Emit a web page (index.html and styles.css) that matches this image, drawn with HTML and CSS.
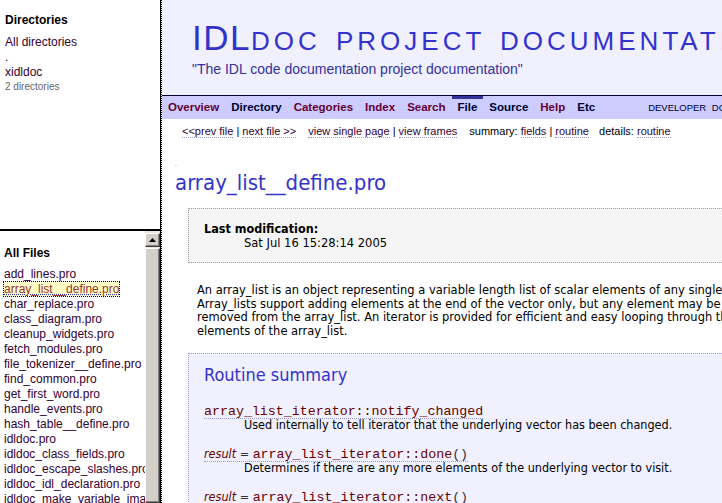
FILE: index.html
```html
<!DOCTYPE html>
<html>
<head>
<meta charset="utf-8">
<title>array_list__define.pro</title>
<link rel="stylesheet" href="styles.css">
</head>
<body>
<div class="frames">
  <div class="left">
    <div class="dirs">
      <div class="lh">Directories</div>
      <div class="dgap"></div>
      <div class="dlink"><a href="#">All directories</a></div>
      <div class="dlink"><a href="#">.</a></div>
      <div class="dlink"><a href="#">xidldoc</a></div>
      <div class="count">2 directories</div>
    </div>
    <div class="files">
      <div class="filelist">
        <div class="lh fh">All Files</div>
        <ul class="flist">
          <li><a href="#">add_lines.pro</a></li>
          <li><a href="#" class="current">array_list__define.pro</a></li>
          <li><a href="#">char_replace.pro</a></li>
          <li><a href="#">class_diagram.pro</a></li>
          <li><a href="#">cleanup_widgets.pro</a></li>
          <li><a href="#">fetch_modules.pro</a></li>
          <li><a href="#">file_tokenizer__define.pro</a></li>
          <li><a href="#">find_common.pro</a></li>
          <li><a href="#">get_first_word.pro</a></li>
          <li><a href="#">handle_events.pro</a></li>
          <li><a href="#">hash_table__define.pro</a></li>
          <li><a href="#">idldoc.pro</a></li>
          <li><a href="#">idldoc_class_fields.pro</a></li>
          <li><a href="#">idldoc_escape_slashes.pro</a></li>
          <li><a href="#">idldoc_idl_declaration.pro</a></li>
          <li><a href="#">idldoc_make_variable_image.pro</a></li>
          <li><a href="#">idldoc_process_file.pro</a></li>
        </ul>
      </div>
      <div class="scrollbar">
        <div class="sb-btn"><svg width="7" height="4" viewBox="0 0 7 4"><path d="M3.5 0 L7 4 L0 4 Z" fill="#000"/></svg></div>
        <div class="sb-thumb"></div>
      </div>
    </div>
  </div>
  <div class="right">
    <div class="page">
      <div class="header">
        <div class="title">IDL<span class="sc">doc project documentation</span></div>
        <div class="subtitle">"The IDL code documentation project documentation"</div>
      </div>
      <div class="nav">
        <a href="#" class="nav-item link">Overview</a>
        <span class="nav-item">Directory</span>
        <a href="#" class="nav-item link">Categories</a>
        <a href="#" class="nav-item link">Index</a>
        <a href="#" class="nav-item link">Search</a>
        <span class="nav-item selected">File</span>
        <span class="nav-item">Source</span>
        <a href="#" class="nav-item link">Help</a>
        <span class="nav-item">Etc</span>
        <span class="nav-label">DEVELOPER DOCUMENTATION</span>
      </div>
      <div class="subnav">
        <span class="grp"><a href="#">&lt;&lt;prev file</a> | <a href="#">next file &gt;&gt;</a></span>
        <span class="grp"><a href="#">view single page</a> | <a href="#">view frames</a></span>
        <span class="grp">summary: <a href="#">fields</a> | <a href="#">routine</a></span>
        <span class="grp">details: <a href="#">routine</a></span>
      </div>
      <div class="main">
        <div class="anchor">.</div>
        <h1 class="filename">array_list__define.pro</h1>
        <div class="modbox">
          <dl class="mod">
            <dt>Last modification:</dt>
            <dd>Sat Jul 16 15:28:14 2005</dd>
          </dl>
        </div>
        <p class="desc">An array_list is an object representing a variable length list of scalar elements of any single type.<br>Array_lists support adding elements at the end of the vector only, but any element may be<br>removed from the array_list. An iterator is provided for efficient and easy looping through the<br>elements of the array_list.</p>
        <div class="summary">
          <h2 class="sum-title">Routine summary</h2>
          <dl class="routines">
            <dt><a href="#" class="rname"><span class="code">array_list_iterator::notify_changed</span></a></dt>
            <dd>Used internally to tell iterator that the underlying vector has been changed.</dd>
            <dt><a href="#" class="rname"><span class="result">result</span> = <span class="code">array_list_iterator::done</span><span class="paren">()</span></a></dt>
            <dd>Determines if there are any more elements of the underlying vector to visit.</dd>
            <dt><a href="#" class="rname"><span class="result">result</span> = <span class="code">array_list_iterator::next</span><span class="paren">()</span></a></dt>
            <dd>Returns the next element of the underlying vector.</dd>
          </dl>
        </div>
      </div>
    </div>
  </div>
</div>
</body>
</html>
```

FILE: styles.css
```css
html, body {
  margin: 0;
  padding: 0;
  width: 722px;
  height: 503px;
  overflow: hidden;
  background: #fff;
}

a { text-decoration: none; }

.frames {
  display: flex;
  width: 722px;
  height: 503px;
}

/* ---------- left frames ---------- */
.left {
  width: 160px;
  border-right: 1px solid #000;
  display: flex;
  flex-direction: column;
  font-family: "Liberation Sans", Arial, sans-serif;
  font-size: 12px;
}

.dirs {
  height: 231px;
  box-sizing: border-box;
  border-bottom: 2px solid #000;
  padding: 13px 0 0 5px;
}

.lh {
  font-weight: bold;
  line-height: 15px;
  color: #000;
}

.dgap { height: 7px; }

.dlink {
  line-height: 15px;
}
.dlink a { color: #330033; }

.count {
  font-size: 10px;
  line-height: 13px;
  color: #666;
}

.files {
  flex: 1;
  display: flex;
  overflow: hidden;
}

.filelist {
  flex: 1;
  overflow: hidden;
  white-space: nowrap;
  padding: 15px 0 0 4px;
}

.fh { margin-bottom: 6px; }

.flist {
  list-style: none;
  margin: 0;
  padding: 0;
}
.flist li { line-height: 15px; height: 15px; }
.flist a { color: #330033; }
.flist a.current {
  color: #a03030;
  background: #ffffc8;
  text-decoration: underline;
  text-decoration-color: #3333aa;
  text-decoration-style: dotted;
  outline: 1px dotted #000;
  outline-offset: 0;
}

.scrollbar {
  width: 15px;
  background: #e8e6e0;
  display: flex;
  flex-direction: column;
  padding-top: 2px;
}

.sb-btn {
  height: 14px;
  box-sizing: border-box;
  background: #d4d0c8;
  border: 1px solid;
  border-color: #fff #404040 #404040 #fff;
  box-shadow: inset -1px -1px 0 #808080;
  display: flex;
  align-items: center;
  justify-content: center;
}

.sb-thumb {
  flex: 1;
  margin-top: 1px;
  background: #d4d0c8;
  border: 1px solid;
  border-color: #fff #404040 #404040 #fff;
  box-shadow: inset -1px -1px 0 #808080;
}

/* ---------- right frame ---------- */
.right {
  flex: 1;
  border-left: 1px dotted #000;
  overflow: hidden;
}

.page {
  width: 900px;
}

.header {
  background: #f0f0ff;
  height: 95px;
  box-sizing: border-box;
  padding: 18px 0 0 30px;
  font-family: "Liberation Sans", Arial, sans-serif;
}

.title {
  font-size: 35px;
  line-height: 40px;
  letter-spacing: 1.5px;
  color: #3333cc;
  white-space: nowrap;
}

.title .sc {
  font-size: 26px;
  text-transform: uppercase;
  letter-spacing: 4px;
  word-spacing: 4px;
}

.subtitle {
  font-size: 14px;
  line-height: 17px;
  color: #333399;
}

.nav {
  display: flex;
  align-items: center;
  height: 23px;
  background: #ccccff;
  border-top: 1px solid #000033;
  font-family: "Liberation Sans", Arial, sans-serif;
  font-size: 11.5px;
  font-weight: bold;
}

.nav-item {
  padding: 0 6px;
  line-height: 23px;
  color: #000033;
}
.nav-item.link { color: #660033; }
.nav-item.selected {
  box-shadow: inset 0 3px 0 #333399;
}

.nav-label {
  margin-left: 47px;
  font-size: 9.5px;
  font-weight: normal;
  color: #000033;
  word-spacing: 3px;
  white-space: nowrap;
}

.subnav {
  padding: 5px 0 0 20px;
  line-height: 14px;
  font-family: "Liberation Sans", Arial, sans-serif;
  font-size: 11px;
  color: #000;
}
.subnav .grp { margin-right: 9px; }
.subnav .grp:nth-child(3) { margin-right: 7px; }
.subnav a {
  color: #330033;
  border-bottom: 1px dotted #9999cc;
}

.main {
  font-family: "DejaVu Sans Condensed", "DejaVu Sans", sans-serif;
  font-size: 12.5px;
  color: #000;
}

.anchor {
  margin: 22px 0 0 13px;
  font-size: 6px;
  line-height: 8px;
  color: #3333cc;
}

.filename {
  margin: 2px 0 0 13px;
  font-size: 22px;
  font-weight: normal;
  line-height: 26px;
  color: #3333cc;
}

.modbox {
  margin: 12px 0 0 26px;
  background: #f5f5f5;
  border: 1px dotted #999;
  padding: 13px 15px 12px;
}

.mod { margin: 0; }
.mod dt { font-weight: bold; line-height: 14px; }
.mod dd { margin: 0 0 0 40px; line-height: 14px; font-size: 12.8px; }

.desc {
  margin: 20px 0 0 35px;
  font-size: 12.75px;
  line-height: 13.5px;
}

.summary {
  margin: 16px 0 0 26px;
  background: #f0f0ff;
  border: 1px dotted #9999dd;
  padding: 10px 15px 20px;
}

.sum-title {
  margin: 0;
  font-size: 18px;
  font-weight: normal;
  line-height: 22px;
  color: #3333cc;
}

.routines { margin: 18px 0 0; }
.routines dt { line-height: 14px; height: 14px; }
.routines dd { margin: 0 0 15px 40px; line-height: 14px; }

.rname {
  color: #333;
  border-bottom: 1px dotted #9999cc;
}
.code {
  font-family: "Liberation Mono", "Courier New", monospace;
  font-size: 13.3px;
  color: #660000;
}
.paren {
  font-family: "Liberation Mono", "Courier New", monospace;
  font-size: 13.3px;
  color: #333;
}
.result {
  font-style: italic;
  color: #660000;
}
```
